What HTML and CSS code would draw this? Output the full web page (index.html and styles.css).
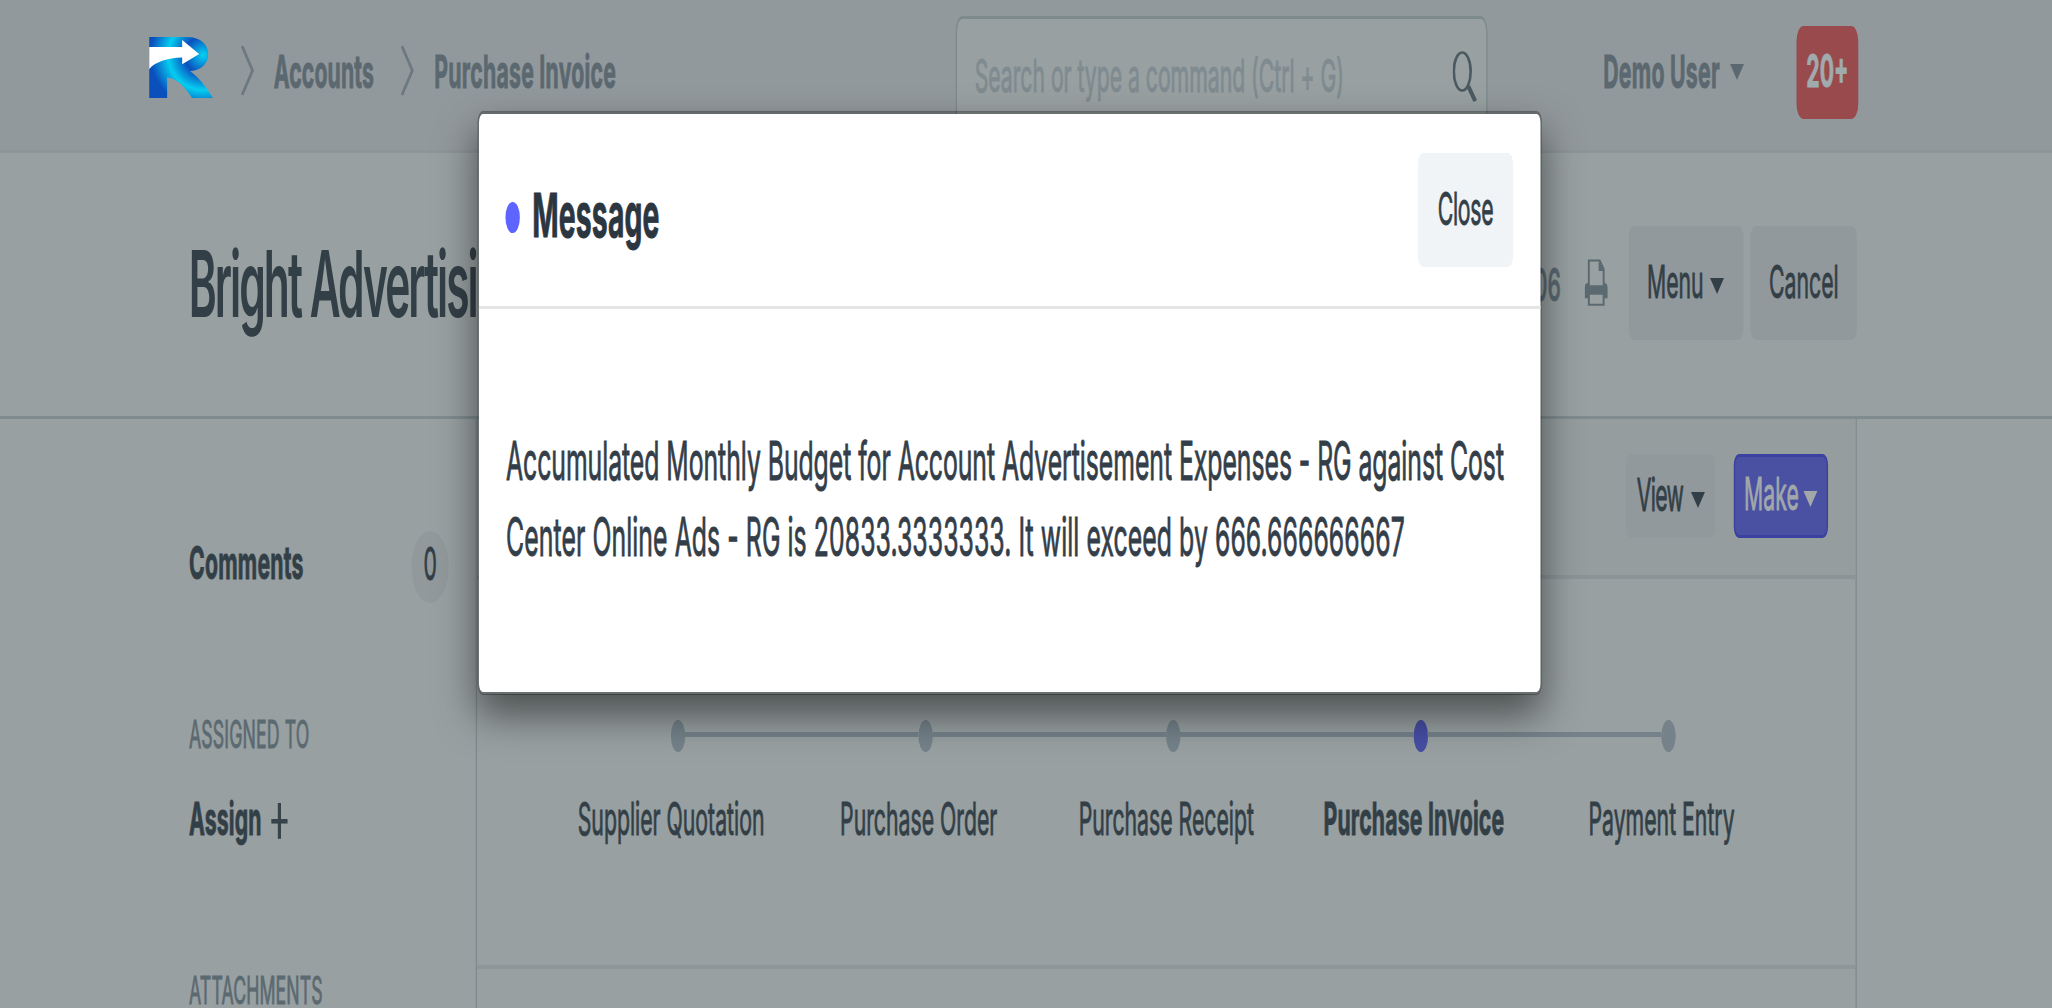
FILE: index.html
```html
<!DOCTYPE html>
<html lang="en">
<head>
<meta charset="utf-8">
<title>Purchase Invoice</title>
<link rel="stylesheet" href="styles.css">
</head>
<body>
<div class="stage">
  <header class="navbar">
    <svg class="logo" viewBox="0 0 64 61" preserveAspectRatio="none">
      <defs>
        <radialGradient id="rings" gradientUnits="userSpaceOnUse" cx="54" cy="18" r="56">
          <stop offset="0" stop-color="#05d3f4"/>
          <stop offset="0.33" stop-color="#0b4fbd"/>
          <stop offset="0.62" stop-color="#05cdf0"/>
          <stop offset="0.94" stop-color="#0b4fbd"/>
        </radialGradient>
      </defs>
      <path d="M0 0H38C52 0 59 8 59 17C59 27 52 33 41 34C50 40 57 50 64 61H43C36 50 29 42 18 40V61H0Z" fill="url(#rings)"/>
      <path d="M0 10H33V3L50 17L33 27V20.500C18 21 6 25 0 32Z" fill="#fff"/>
    </svg>
    <svg class="chevron chevron-first" viewBox="0 0 13 51" preserveAspectRatio="none"><path d="M1 1L11.500 25.500L1 50"/></svg>
    <span class="crumb crumb-module">Accounts</span>
    <svg class="chevron" viewBox="0 0 13 51" preserveAspectRatio="none"><path d="M1 1L11.500 25.500L1 50"/></svg>
    <span class="crumb crumb-doctype">Purchase Invoice</span>
    <div class="search">
      <span>Search or type a command (Ctrl + G)</span>
      <svg class="search-icon" viewBox="0 0 24 51" preserveAspectRatio="none"><ellipse cx="9.500" cy="20.500" rx="8.400" ry="19"/><path class="handle" d="M15.500 35L22.500 50"/></svg>
    </div>
    <span class="user">Demo User</span>
    <i class="caret caret-user"></i>
    <span class="badge">20+</span>
  </header>

  <section class="page-head">
    <h1>Bright Advertising</h1>
    <span class="doc-id">PINV-00006</span>
    <svg class="printer" viewBox="0 0 23 47" preserveAspectRatio="none">
      <path d="M4.200 26V1.500H15L19 10V26" fill="none" stroke="#5b6971" stroke-width="1.900"/>
      <path d="M14 1.500V12H19.500Z" fill="#5b6971"/>
      <path d="M2.500 24H4.500V26H18.500V24H20.500Q23 25 23 28V39H0V28Q0 25 2.500 24Z" fill="#5b6971"/>
      <path d="M4.200 34.500H19V45.500H4.200Z" fill="#98a0a1" stroke="#5b6971" stroke-width="2"/>
    </svg>
    <div class="btn btn-menu">Menu<i class="caret"></i></div>
    <div class="btn btn-cancel">Cancel</div>
  </section>

  <div class="content">
    <aside class="sidebar">
      <div class="side-row"><b>Comments</b><span class="count">0</span></div>
      <div class="side-label">ASSIGNED TO</div>
      <div class="side-assign"><b>Assign</b><i class="plus"></i></div>
      <div class="side-label side-attachments">ATTACHMENTS</div>
    </aside>
    <main class="form">
      <div class="toolbar">
        <div class="btn btn-view">View<i class="caret"></i></div>
        <div class="btn btn-make">Make<i class="caret"></i></div>
      </div>
      <div class="flow">
        <div class="step"><i class="dot"></i><span>Supplier Quotation</span></div>
        <div class="step"><i class="dot"></i><span>Purchase Order</span></div>
        <div class="step"><i class="dot"></i><span>Purchase Receipt</span></div>
        <div class="step active"><i class="dot"></i><span>Purchase Invoice</span></div>
        <div class="step"><i class="dot"></i><span>Payment Entry</span></div>
      </div>
    </main>
  </div>

  <div class="modal">
    <div class="modal-head">
      <i class="indicator"></i>
      <h2>Message</h2>
      <div class="close">Close</div>
    </div>
    <p>Accumulated Monthly Budget for Account Advertisement Expenses - RG against Cost<br><span class="amounts">Center Online Ads - RG is 20833.3333333. It will exceed by 666.666666667</span></p>
  </div>
</div>
</body>
</html>
```
FILE: styles.css
```css
* { box-sizing: border-box; }

html, body {
  margin: 0;
  height: 100%;
  overflow: hidden;
  background: #98a0a1;
}

.stage {
  position: relative;
  width: 1159.3px;
  height: 264.5px;
  overflow: hidden;
  zoom: 3.81;
  transform: scaleX(.464567);
  transform-origin: 0 0;
  background: #98a0a1;
  color: #333f47;
  font: 12px/20px Inter, "Liberation Sans", sans-serif;
  white-space: nowrap;
  -webkit-text-stroke: .25px currentColor;
}

h1, h2, p { margin: 0; }
svg { display: block; flex: none; }
span, b { flex: none; }

.caret {
  display: block;
  flex: none;
  width: 0;
  height: 0;
  border: 4px solid transparent;
  border-top: 4.4px solid currentColor;
  border-bottom: 0;
}

.navbar {
  display: flex;
  align-items: flex-start;
  height: 40.1px;
  border-bottom: .9px solid #8d9598;
  background: #92999c;
  color: #5b6870;
  font-weight: 700;
  line-height: 37.6px;
}
.logo { width: 36.2px; height: 16.1px; margin: 9.7px 0 0 84.2px; }
.chevron { width: 7.3px; height: 13.4px; margin-top: 11.8px; fill: none; stroke: #6c7980; stroke-width: 2.8; }
.chevron-first { margin-left: 15.8px; }
.crumb-module { width: 72px; margin-left: 11.1px; letter-spacing: .08px; }
.crumb-doctype { width: 294.5px; margin-left: 11.5px; letter-spacing: .14px; }
.search {
  display: flex;
  width: 300.6px;
  height: 30px;
  margin-top: 4.1px;
  padding-left: 10px;
  border: 1px solid #7e8b8c;
  border-radius: 4px;
  background: #98a0a1;
  color: #7f8b90;
  font-weight: 400;
  line-height: 29.9px;
}
.search span { width: 270px; letter-spacing: -.02px; }
.search-icon { width: 13.6px; height: 13.4px; margin-top: 8.4px; fill: none; stroke: #4b5960; stroke-width: 2.6; }
.search-icon .handle { stroke-width: 4; }
.user { width: 71.7px; margin-left: 65.3px; letter-spacing: .15px; }
.caret-user { margin-top: 16.9px; }
.badge {
  width: 34.9px;
  height: 24.3px;
  margin: 6.9px 0 0 29.6px;
  border-radius: 4px;
  background: #994a4c;
  color: #a0abad;
  text-align: center;
  line-height: 23.6px;
}

.page-head {
  display: flex;
  align-items: flex-start;
  height: 70px;
  padding-left: 106.6px;
  border-bottom: 1px solid #7f8b8f;
}
h1 { width: 600px; font-size: 24px; font-weight: 600; line-height: 68.6px; letter-spacing: -1.1px; -webkit-text-stroke: 0; }
.doc-id { width: 175.2px; color: #5b6971; font-weight: 500; line-height: 69.4px; text-align: right; }
.printer { width: 13px; height: 12.4px; margin: 27.8px 11.8px 0 13.5px; }

.btn {
  display: flex;
  align-items: flex-start;
  flex: none;
  border-radius: 3px;
  background: #92999c;
}
.page-head .btn { height: 30px; margin-top: 19.1px; line-height: 29.3px; }
.btn-menu { width: 65px; padding-left: 10.4px; margin-right: 3.9px; }
.btn-menu .caret { margin: 13.7px 0 0 3.7px; }
.btn-cancel { width: 60px; padding-left: 10.5px; }

.content { display: flex; height: 154.4px; }

.sidebar { width: 268.7px; padding: 27.8px 0 0 106.8px; }
.side-row { display: flex; height: 20px; }
.side-row b { width: 125.8px; letter-spacing: .12px; }
.count {
  width: 21px;
  height: 19.1px;
  margin-top: 1.4px;
  border-radius: 50%;
  background: #92999c;
  text-align: center;
  line-height: 17.4px;
}
.side-label { margin-top: 29.9px; color: #5b6971; font-size: 10px; line-height: 10px; letter-spacing: .07px; }
.side-assign { display: flex; height: 20px; margin-top: 7.3px; letter-spacing: .08px; }
.plus {
  width: 9.2px;
  height: 9.4px;
  margin: 5.8px 0 0 5.3px;
  background:
    linear-gradient(#36434a, #36434a) center / 9.2px 1.2px no-repeat,
    linear-gradient(#36434a, #36434a) center / 1.8px 9.4px no-repeat;
}
.side-attachments { margin-top: 29.7px; }

.form {
  width: 780.3px;
  border: solid #7f8b8f;
  border-width: 0 .8px;
}
.toolbar {
  display: flex;
  align-items: flex-start;
  height: 42px;
  padding: 9.1px 0 0 649.2px;
  border-bottom: 1.1px solid #8b9497;
  background: #959d9e;
}
.toolbar .btn { height: 22.1px; line-height: 21.4px; }
.btn-view { width: 50.3px; padding-left: 6px; margin-right: 10.6px; letter-spacing: -.35px; }
.toolbar .caret { margin: 10px 0 0 4.4px; }
.btn-make { width: 53.3px; padding-left: 5px; border: 1px solid #3b41a0; background: #4a50a2; color: #a2a8aa; }
.toolbar .btn-make { line-height: 19.6px; }
.toolbar .btn-make .caret { margin: 9px 0 0 2.6px; }

.flow {
  display: flex;
  height: 102.3px;
  padding: 36.9px 0 0 43.6px;
  border-bottom: 1.1px solid #8d9699;
}
.step { position: relative; display: flex; flex-direction: column; align-items: center; width: 139.9px; flex: none; }
.step + .step::before {
  content: "";
  position: absolute;
  left: -66px;
  top: 3.1px;
  width: 132px;
  height: 1.4px;
  background: #75828a;
}
.dot { width: 8px; height: 8.4px; border-radius: 50%; background: #75828a; }
.step span { margin: 7.6px 7.8px 0 0; }
.active .dot { background: #464ea3; }
.active span { font-weight: 700; letter-spacing: .11px; }

.modal {
  position: absolute;
  left: 269.8px;
  top: 29.1px;
  width: 601.4px;
  height: 153.2px;
  border: 1px solid rgba(0, 0, 0, .3);
  border-radius: 3px;
  background: #fff;
  background-clip: padding-box;
  box-shadow: 0 5px 15px rgba(0, 0, 0, .5);
}
.modal-head {
  display: flex;
  align-items: flex-start;
  height: 51.2px;
  padding-left: 15.1px;
  border-bottom: 1px solid #e5e5e5;
}
.indicator { width: 8.1px; height: 8.2px; margin-top: 23.1px; border-radius: 50%; background: #5e64ff; }
h2 { width: 500.3px; margin-left: 6.9px; color: #2b3640; font-size: 16px; font-weight: 700; line-height: 53.2px; letter-spacing: .1px; }
.close {
  width: 54px;
  height: 29.9px;
  margin-top: 10.2px;
  border-radius: 3px;
  background: #f0f4f7;
  text-align: center;
  line-height: 29.4px;
  letter-spacing: -.15px;
}
p { padding: 30px 0 0 15.3px; font-size: 14px; line-height: 20px; letter-spacing: -.02px; color: #333e49; }
.amounts { letter-spacing: .05px; }
```
